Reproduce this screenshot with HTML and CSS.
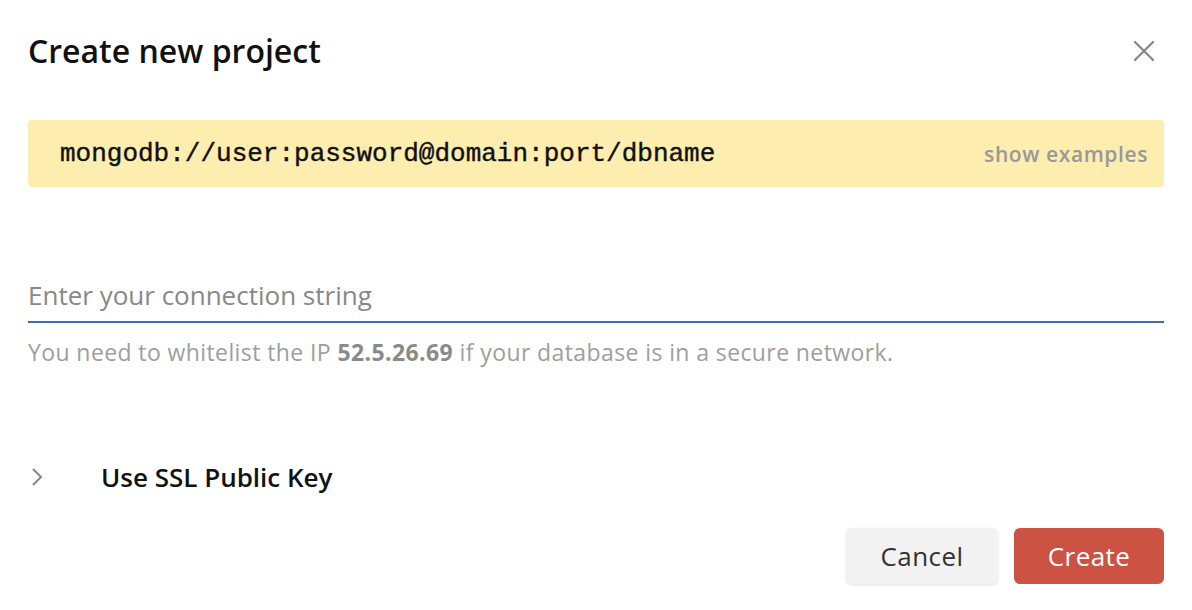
FILE: index.html
```html
<!DOCTYPE html>
<html>
<head>
<meta charset="utf-8">
<link rel="stylesheet" href="styles.css">
</head>
<body>
<div class="modal">
  <div class="header">
    <h1 class="title">Create new project</h1>
    <button class="close" aria-label="Close">
      <svg width="22" height="22" viewBox="0 0 22 22"><path d="M2 2 L20 20 M20 2 L2 20" stroke="#8a8a8a" stroke-width="2.4" stroke-linecap="round"/></svg>
    </button>
  </div>
  <div class="example">
    <code class="uri">mongodb://user:password@domain:port/dbname</code>
    <span class="show">show examples</span>
  </div>
  <div class="field">
    <div class="input">Enter your connection string</div>
    <p class="hint">You need to whitelist the IP <b>52.5.26.69</b> if your database is in a secure network.</p>
  </div>
  <div class="ssl">
    <svg class="chev" width="14" height="22" viewBox="0 0 14 22"><path d="M3 3 L11 11 L3 19" fill="none" stroke="#888" stroke-width="2"/></svg>
    <span class="ssl-label">Use SSL Public Key</span>
  </div>
  <div class="actions">
    <button class="btn cancel">Cancel</button>
    <button class="btn create">Create</button>
  </div>
</div>
</body>
</html>
```
FILE: styles.css
```css
* { box-sizing: border-box; }
html, body { margin: 0; padding: 0; background: #fff; }
body { font-family: "Open Sans", "Noto Sans", sans-serif; width: 1192px; height: 610px; overflow: hidden; }
.modal { padding: 28px 28px 0 28px; }
.header { display: flex; justify-content: space-between; align-items: center; height: 46px; }
.title { margin: 0; font-size: 32px; font-weight: 600; color: #111; line-height: 46px; }
.close { background: none; border: 0; padding: 0; margin-right: 9px; width: 22px; height: 22px; display: flex; }
.example { margin-top: 46px; height: 67px; background: #fdeeaf; border-radius: 4px; display: flex; align-items: center; justify-content: space-between; padding: 0 16px 0 32px; }
.uri { font-family: "Liberation Mono", "Courier New", monospace; font-size: 26px; color: #111; -webkit-text-stroke: 0.4px #111; }
.show { font-size: 21px; color: #999; font-weight: 600; letter-spacing: 0.6px; }
.field { margin-top: 88px; }
.input { font-size: 26px; color: #888; height: 48px; line-height: 40px; border-bottom: 2px solid #3d6bb3; }
.hint { margin: 14px 0 0; font-size: 23px; color: #9e9e9e; line-height: 30px; letter-spacing: 0.4px; }
.hint b { color: #8a8a8a; font-weight: 700; }
.ssl { margin-top: 94px; display: flex; align-items: center; height: 32px; }
.chev { margin-left: 2px; }
.ssl-label { margin-left: 57px; font-size: 26px; font-weight: 600; color: #111; }
.actions { margin-top: 35px; display: flex; justify-content: flex-end; gap: 16px; }
.btn { font-family: inherit; font-size: 26px; letter-spacing: 0.4px; border: 0; border-radius: 6px; height: 56px; cursor: pointer; }
.cancel { width: 152px; background: #f2f2f2; color: #333; box-shadow: 0 1px 3px rgba(0,0,0,0.12); }
.create { width: 150px; background: #cc5243; color: #fff; }
```
